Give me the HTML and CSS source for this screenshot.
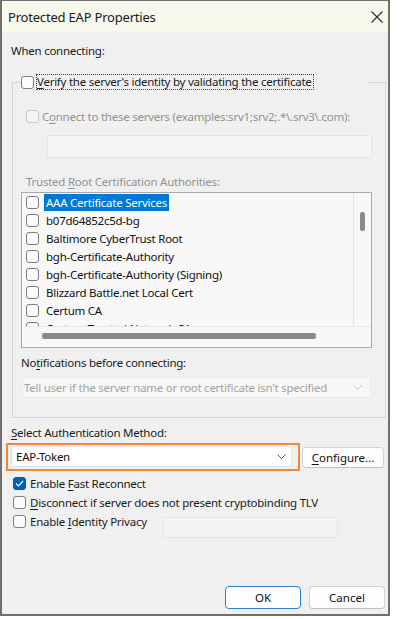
FILE: index.html
```html
<!DOCTYPE html>
<html lang="en">
<head>
  <meta charset="UTF-8" />
  <meta name="viewport" content="width=device-width, initial-scale=1.0"/>
  <title>Protected EAP Properties</title>
  <link rel="stylesheet" href="styles.css">
</head>
<body>
  <div class="dialog">
    <div class="titlebar">
      <span class="title">Protected EAP Properties</span>
      <svg class="close" width="12" height="12" viewBox="0 0 12 12">
        <path d="M0.5 0.5 L11.5 11.5 M11.5 0.5 L0.5 11.5" stroke="#2b2b2b" stroke-width="1.1" fill="none"/>
      </svg>
    </div>

    <div class="content">
      <div class="label first">When connecting:</div>

      <fieldset class="group">
        <legend>
          <div class="check">
            <span class="box"></span>
            <span class="focus-text"><u>V</u>erify the server's identity by validating the certificate</span>
          </div>
        </legend>

        <div class="check disabled indent">
          <span class="box"></span>
          <span>C<u>o</u>nnect to these servers (examples:srv1;srv2;.*\.srv3\.com):</span>
        </div>
        <div class="textbox servers"></div>

        <div class="label disabled trusted">Trusted <u>R</u>oot Certification Authorities:</div>
        <div class="list">
          <div class="list-body">
            <div class="items">
              <div class="item"><span class="box"></span><span class="sel">AAA Certificate Services</span></div>
              <div class="item"><span class="box"></span><span>b07d64852c5d-bg</span></div>
              <div class="item"><span class="box"></span><span>Baltimore CyberTrust Root</span></div>
              <div class="item"><span class="box"></span><span>bgh-Certificate-Authority</span></div>
              <div class="item"><span class="box"></span><span>bgh-Certificate-Authority (Signing)</span></div>
              <div class="item"><span class="box"></span><span>Blizzard Battle.net Local Cert</span></div>
              <div class="item"><span class="box"></span><span>Certum CA</span></div>
              <div class="item"><span class="box"></span><span>Certum Trusted Network CA</span></div>
            </div>
            <div class="vscroll"><span class="thumb"></span></div>
          </div>
          <div class="hscroll"><span class="thumb"></span></div>
        </div>

        <div class="label notify">No<u>t</u>ifications before connecting:</div>
        <div class="dropdown">
          <span>Tell user if the server name or root certificate isn't specified</span>
          <svg width="9" height="5" viewBox="0 0 9 5"><path d="M0.5 0.5 L4.5 4.5 L8.5 0.5" stroke="#c4c4c4" fill="none"/></svg>
        </div>
      </fieldset>

      <div class="label auth"><u>S</u>elect Authentication Method:</div>
      <div class="auth-row">
        <div class="highlight">
          <div class="combo">
            <span>EAP-Token</span>
            <svg width="9" height="5" viewBox="0 0 9 5"><path d="M0.5 0.5 L4.5 4.5 L8.5 0.5" stroke="#5c5c5c" fill="none"/></svg>
          </div>
        </div>
        <button class="btn configure"><u>C</u>onfigure...</button>
      </div>

      <div class="options">
        <div class="check opt">
          <span class="box checked">
            <svg width="9" height="7" viewBox="0 0 9 7"><path d="M1 3.5 L3.5 6 L8 1" stroke="#fff" stroke-width="1.2" fill="none"/></svg>
          </span>
          <span>Enable <u>F</u>ast Reconnect</span>
        </div>
        <div class="check opt">
          <span class="box"></span>
          <span><u>D</u>isconnect if server does not present cryptobinding TLV</span>
        </div>
        <div class="privacy-row">
          <div class="check opt wide">
            <span class="box"></span>
            <span>Enable <u>I</u>dentity Privacy</span>
          </div>
          <div class="textbox identity"></div>
        </div>
      </div>

      <div class="buttons">
        <button class="btn default">OK</button>
        <button class="btn">Cancel</button>
      </div>
    </div>
  </div>
</body>
</html>
```

FILE: styles.css
```css
* {
  box-sizing: border-box;
}
body {
  margin: 0;
  background: #fff;
  font-family: "Noto Sans", sans-serif;
  font-size: 11.5px;
  letter-spacing: -0.25px;
  color: #1a1a1a;
}
u {
  text-underline-offset: 2px;
}
.dialog {
  width: 390px;
  height: 616px;
  border: 2px solid #6f6f6f;
  border-top-width: 1px;
  background: #f0f0f0;
  display: flex;
  flex-direction: column;
}
.titlebar {
  height: 31px;
  flex: none;
  background: #f6f8ec;
  display: flex;
  align-items: center;
  justify-content: space-between;
  padding: 0 5px 0 6px;
}
.title {
  font-size: 13px;
  letter-spacing: -0.2px;
  color: #1b1b1b;
}
.content {
  flex: 1;
  display: flex;
  flex-direction: column;
  padding: 0 2px 5px 9px;
}
.label {
  line-height: 16px;
  height: 16px;
}
.first {
  margin-top: 11px;
}
.disabled {
  color: #929292;
}

/* checkboxes */
.check {
  display: flex;
  align-items: center;
  height: 16px;
  white-space: nowrap;
}
.box {
  width: 13px;
  height: 13px;
  flex: none;
  border: 1px solid #7d7d7d;
  border-radius: 3px;
  background: #fbfbfb;
  display: flex;
  align-items: center;
  justify-content: center;
}
.box.checked {
  background: #005fb8;
  border-color: #005fb8;
}
.check .box {
  margin-right: 2px;
}
.disabled .box {
  border-color: #c9c9c9;
  background: #f5f5f5;
}
.focus-text {
  border: 1px dotted #444;
  line-height: 14px;
  padding-right: 1px;
}

/* group box */
.group {
  margin: 15px 0 0 1px;
  padding: 18px 13px 19px 8px;
  border: 1px solid #d6d6d6;
  min-width: 0;
}
.group legend {
  padding: 0;
  width: 346px;
}
.indent {
  margin-left: 5px;
}
.indent .box {
  margin-right: 3px;
}
.textbox {
  height: 21px;
  border: 1px solid #e6e6e6;
  background: #f4f4f4;
}
.servers {
  height: 23px;
  margin: 11px 0 0 26px;
}
.trusted {
  margin: 16px 0 0 5px;
}

/* certificate list */
.list {
  margin-top: 2px;
  height: 156px;
  border: 1px solid #a9a9a9;
  background: #f8f8f8;
  display: flex;
  flex-direction: column;
}
.list-body {
  height: 134px;
  display: flex;
  border-bottom: 1px solid #e8e8e8;
}
.items {
  flex: 1;
  overflow: hidden;
  padding-left: 4px;
}
.item {
  display: flex;
  align-items: center;
  height: 18px;
  white-space: nowrap;
  color: #111;
}
.item .box {
  margin-right: 5px;
}
.item span + span {
  padding: 0 2px;
  line-height: 17px;
}
.item .sel {
  background: #0078d7;
  color: #fff;
}
.vscroll {
  width: 18px;
  flex: none;
  border-left: 1px solid #e3e3e3;
  display: flex;
  justify-content: center;
  padding-top: 19px;
}
.vscroll .thumb {
  width: 5px;
  height: 19px;
  background: #8a8a8a;
  border-radius: 2px;
}
.hscroll {
  flex: 1;
  padding: 6px 0 0 20px;
}
.hscroll .thumb {
  display: block;
  width: 274px;
  height: 6px;
  background: #8a8a8a;
  border-radius: 2px;
}
.notify {
  margin-top: 7px;
}
.dropdown {
  margin: 6px 1px 0 1px;
  height: 21px;
  background: #f7f7f7;
  border: 1px solid #ececec;
  color: #a3a3a3;
  display: flex;
  align-items: center;
  justify-content: space-between;
  padding: 0 8px 0 1px;
  white-space: nowrap;
}

/* authentication method */
.auth {
  margin-top: 7px;
}
.auth-row {
  display: flex;
  align-items: center;
  margin-top: 2px;
}
.highlight {
  margin-left: -5px;
  border: 2px solid #f0883a;
  padding: 1px 6px 2px 3px;
}
.combo {
  width: 281px;
  height: 21px;
  background: #fff;
  border: 1px solid #e2e2e2;
  border-radius: 2px;
  display: flex;
  align-items: center;
  justify-content: space-between;
  padding: 0 5px 0 4px;
  color: #111;
}
.btn {
  font: inherit;
  color: #111;
  height: 23px;
  width: 76px;
  background: #fdfdfd;
  border: 1px solid #d3d3d3;
  border-bottom-color: #c2c2c2;
  border-radius: 4px;
  padding: 0;
}
.configure {
  width: 82px;
  height: 21px;
  margin-left: 2px;
}
.options {
  margin-top: 3px;
}
.opt {
  height: 19px;
  margin-left: 2px;
}
.opt .box {
  margin-right: 4px;
}
.privacy-row {
  display: flex;
  align-items: flex-start;
}
.wide {
  width: 150px;
}
.identity {
  width: 175px;
  margin-top: 5px;
  background: #f2f2f2;
}
.buttons {
  margin-top: auto;
  display: flex;
  justify-content: flex-end;
  gap: 8px;
  margin-right: 1px;
}
.btn.default {
  border-color: #2f7fcf;
}
```
